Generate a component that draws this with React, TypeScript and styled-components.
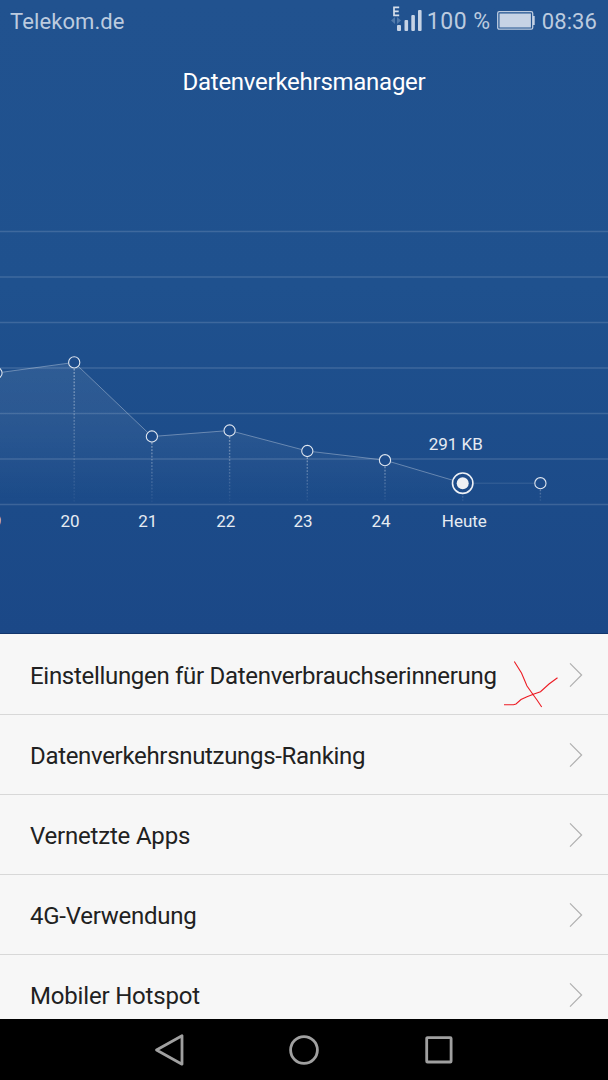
import React from "react";
import styled, { createGlobalStyle } from "styled-components";

const GlobalStyle = createGlobalStyle`
  html, body { margin: 0; padding: 0; background: #000; }
  body { font-family: Roboto, "Liberation Sans", sans-serif; }
`;

const Screen = styled.div`
  width: 608px;
  height: 1080px;
  display: flex;
  flex-direction: column;
  overflow: hidden;
`;

const Hero = styled.section`
  flex: none;
  height: 634px;
  box-sizing: border-box;
  display: flex;
  flex-direction: column;
  background: linear-gradient(#21528f 0%, #1f518e 45%, #1c4b89 80%, #1b4887 100%);
  border-bottom: 1px solid #12366c;
`;

const StatusBar = styled.header`
  height: 42px;
  padding: 0 11px 0 10px;
  display: flex;
  align-items: center;
  color: #bccbdf;
  font-size: 22px;
`;

const StatusText = styled.span<{ $grow?: boolean; $tracking?: number; $size?: number }>`
  flex: ${(p) => (p.$grow ? "1" : "none")};
  font-size: ${(p) => p.$size ?? 22}px;
  line-height: 41px;
  padding-top: 1px;
  letter-spacing: ${(p) => p.$tracking ?? 0}px;
`;

const SignalIcon = styled.svg`
  width: 34px;
  height: 42px;
  margin-right: 2px;
`;

const BatteryIcon = styled.svg`
  width: 38px;
  height: 42px;
  margin: 0 7px 0 6px;
`;

const Title = styled.h1`
  margin: 0;
  height: 80px;
  line-height: 80px;
  text-align: center;
  font-size: 24px;
  font-weight: 400;
  letter-spacing: -0.26px;
  color: #fff;
`;

const Chart = styled.svg`
  display: block;
  width: 608px;
  height: 511px;
  font-family: Roboto, "Liberation Sans", sans-serif;
  font-size: 17px;
`;

const List = styled.ul`
  position: relative;
  flex: 1;
  min-height: 0;
  margin: 0;
  padding: 1px 0 0;
  box-sizing: border-box;
  list-style: none;
  overflow: hidden;
  background: #f7f7f7;
`;

const Row = styled.li`
  height: 80px;
  padding: 0 25px 0 30px;
  display: flex;
  align-items: center;
  justify-content: space-between;
  box-shadow: inset 0 -1px #d8d8d8;
  font-size: 24px;
  color: #212121;
`;

const RowLabel = styled.span<{ $tracking: number }>`
  line-height: 28px;
  padding-top: 1px;
  white-space: nowrap;
  letter-spacing: ${(p) => p.$tracking}px;
`;

const Chevron = styled.svg`
  width: 14px;
  height: 26px;
`;

const Scribble = styled.svg`
  position: absolute;
  left: 500px;
  top: 22px;
  width: 62px;
  height: 56px;
`;

const NavBar = styled.nav`
  flex: none;
  height: 61px;
  background: #000;
  display: flex;
  align-items: center;
  justify-content: center;
  gap: 103px;
`;

const NavIcon = styled.svg`
  width: 32px;
  height: 34px;
`;

const GRID = [231.5, 277, 322.5, 368, 413.5, 459, 504.5];
const BASE = 504;

const POINTS = [
  { x: -3.5, y: 373, label: "19", labelX: -8 },
  { x: 74.2, y: 362.4, label: "20", labelX: 70 },
  { x: 151.9, y: 436.5, label: "21", labelX: 147.7 },
  { x: 229.6, y: 430.5, label: "22", labelX: 225.7 },
  { x: 307.3, y: 451, label: "23", labelX: 303 },
  { x: 385, y: 460.2, label: "24", labelX: 381 },
  { x: 462.7, y: 483.2, label: "Heute", labelX: 464.3, active: true },
  { x: 540.4, y: 483.2, label: "", labelX: 540 },
];

const ROWS = [
  { label: "Einstellungen für Datenverbrauchserinnerung", tracking: -0.3 },
  { label: "Datenverkehrsnutzungs-Ranking", tracking: -0.32 },
  { label: "Vernetzte Apps", tracking: -0.2 },
  { label: "4G-Verwendung", tracking: -0.25 },
  { label: "Mobiler Hotspot", tracking: -0.18 },
];

function UsageChart() {
  const used = POINTS.slice(0, 7);
  const area =
    `M${used[0].x} ${BASE}` + used.map((p) => `L${p.x} ${p.y}`).join("") + `V${BASE}Z`;
  return (
    <Chart viewBox="0 122 608 511">
      <defs>
        <linearGradient id="area" gradientUnits="userSpaceOnUse" x1="0" y1="362" x2="0" y2="500">
          <stop offset="0" stopColor="#fff" stopOpacity="0.08" />
          <stop offset="0.5" stopColor="#fff" stopOpacity="0.055" />
          <stop offset="1" stopColor="#fff" stopOpacity="0" />
        </linearGradient>
        {POINTS.map((p, i) => (
          <linearGradient key={i} id={`drop${i}`} gradientUnits="userSpaceOnUse" x1="0" y1={p.y} x2="0" y2="502">
            <stop offset="0" stopColor="#fff" stopOpacity="0.42" />
            <stop offset="1" stopColor="#fff" stopOpacity="0.04" />
          </linearGradient>
        ))}
        <mask id="outside" maskUnits="userSpaceOnUse" x="-20" y="122" width="640" height="512">
          <rect x="-20" y="122" width="640" height="512" fill="#fff" />
          {POINTS.map((p, i) => (
            <circle key={i} cx={p.x} cy={p.y} r={p.active ? 11 : 6} fill="#000" />
          ))}
        </mask>
      </defs>
      {GRID.map((y) => (
        <path key={y} d={`M0 ${y}H608`} stroke="#fff" strokeOpacity="0.14" strokeWidth="1.4" />
      ))}
      <g mask="url(#outside)">
        <path d={area} fill="url(#area)" />
        <path
          d={"M" + used.map((p) => `${p.x} ${p.y}`).join("L")}
          fill="none"
          stroke="#fff"
          strokeOpacity="0.32"
        />
        <path d="M462.6 483.2H540.3" stroke="#fff" strokeOpacity="0.13" />
        {POINTS.map((p, i) => (
          <path
            key={i}
            d={`M${p.x} ${p.y}L${p.x + 0.01} 502`}
            stroke={`url(#drop${i})`}
            strokeDasharray="1.7 1.5"
            strokeWidth="1.4"
          />
        ))}
      </g>
      {POINTS.map((p, i) =>
        p.active ? (
          <g key={i}>
            <circle cx={p.x} cy={p.y} r="10.2" fill="#1d4b89" stroke="#eef1f6" strokeWidth="1.6" />
            <circle cx={p.x} cy={p.y} r="6" fill="#eef0f4" />
          </g>
        ) : (
          <circle key={i} cx={p.x} cy={p.y} r="5.6" fill="#1d4c8b" stroke="#e0e7f0" strokeWidth="1.1" />
        )
      )}
      <g fill="#e6ebf2" textAnchor="middle">
        {POINTS.map((p, i) => (
          <text key={i} x={p.labelX} y="527">
            {p.label}
          </text>
        ))}
        <text x="455.7" y="449.6">
          291 KB
        </text>
      </g>
    </Chart>
  );
}

export default function App() {
  return (
    <Screen>
      <GlobalStyle />
      <Hero>
        <StatusBar>
          <StatusText $grow $tracking={0.1}>Telekom.de</StatusText>
          <SignalIcon viewBox="0 0 34 42">
            <path d="M7 7H1.8V15H7M1.8 11H6.5" transform="translate(1.2 .3)" fill="none" stroke="#d5deea" strokeWidth="1.7" />
            <path d="M0 20.5L4 17V24ZM10 20.5L6 17V24Z" fill="#517aab" />
            <g fill="#c6d3e5">
              <rect x="6" y="25" width="4" height="6" rx="1" />
              <rect x="13.5" y="20" width="3.6" height="11" rx="1" />
              <rect x="20.3" y="15" width="3.6" height="16" rx="1" />
              <rect x="27" y="10" width="3.6" height="21" rx="1" />
            </g>
          </SignalIcon>
          <StatusText $size={23} $tracking={0.5}>100 %</StatusText>
          <BatteryIcon viewBox="0 0 38 42">
            <rect x=".7" y="11.7" width="35" height="17.5" rx="1.5" fill="none" stroke="#bccbdf" strokeWidth="1.3" />
            <rect x="2.5" y="13.5" width="31.4" height="14" fill="#c6d3e5" />
            <path d="M36 16h1.7v9H36Z" fill="#c6d3e5" />
          </BatteryIcon>
          <StatusText $tracking={0.1}>08:36</StatusText>
        </StatusBar>
        <Title>Datenverkehrsmanager</Title>
        <UsageChart />
      </Hero>
      <List>
        {ROWS.map((row) => (
          <Row key={row.label}>
            <RowLabel $tracking={row.tracking}>{row.label}</RowLabel>
            <Chevron viewBox="0 0 14 26">
              <path d="M1 1.3L12.6 13L1 24.7" fill="none" stroke="#b0b0b0" strokeWidth="1.2" />
            </Chevron>
          </Row>
        ))}
        <Scribble viewBox="500 656 62 56">
          <path
            d="M514.3 661.5L521.5 673L527 686L533 694.5L537 700L541.7 707M504 704.8H513.5L516 704L521 699.5L527 696.7L534 694L540.5 691.7L549 684L557.5 677.8"
            fill="none"
            stroke="#ed1c24"
            strokeWidth="1.1"
          />
        </Scribble>
      </List>
      <NavBar>
        <NavIcon viewBox="0 0 32 34">
          <path d="M29 2.8V31.2L3.5 17Z" fill="none" stroke="#a0a0a0" strokeWidth="2.8" strokeLinejoin="round" />
        </NavIcon>
        <NavIcon viewBox="0 0 32 34">
          <circle cx="16" cy="17" r="13.4" fill="none" stroke="#a0a0a0" strokeWidth="2.8" />
        </NavIcon>
        <NavIcon viewBox="0 0 32 34">
          <rect x="3.7" y="4.6" width="24.4" height="24.4" rx=".8" fill="none" stroke="#a0a0a0" strokeWidth="2.8" />
        </NavIcon>
      </NavBar>
    </Screen>
  );
}
